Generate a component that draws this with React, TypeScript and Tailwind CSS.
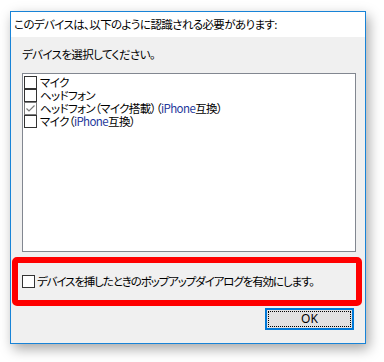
import React from "react";

const jp = { fontFamily: '"Noto Sans CJK JP", "Noto Sans", sans-serif', fontFeatureSettings: '"palt"' };

function Box({ checked = false }: { checked?: boolean }) {
  return (
    <span
      className={`flex h-[13px] w-[13px] shrink-0 items-center justify-center border bg-white ${
        checked ? "border-[#7a7a7a]" : "border-[#333333]"
      }`}
    >
      {checked && (
        <svg width="11" height="11" viewBox="0 0 11 11">
          <polyline points="1.5,5.5 4,8 9.5,2.5" fill="none" stroke="#7a7a7a" strokeWidth="1.2" />
        </svg>
      )}
    </span>
  );
}

const items: { label: React.ReactNode; checked?: boolean }[] = [
  { label: "マイク" },
  { label: "ヘッドフォン" },
  {
    label: (
      <>
        ヘッドフォン（マイク搭載）（<span className="text-[#1f3a9c]">iPhone</span>互換）
      </>
    ),
    checked: true,
  },
  {
    label: (
      <>
        マイク（<span className="text-[#1f3a9c]">iPhone</span>互換）
      </>
    ),
  },
];

export default function App() {
  return (
    <div
      className="h-[362px] w-[384px] bg-white pl-[10px] pt-[11px] text-[11.5px] leading-none tracking-[-0.6px] text-black"
      style={jp}
    >
      <div className="flex h-[333px] w-[356px] flex-col border border-[#1883d7] bg-[#f0f0f0] shadow-[3px_5px_12px_rgba(0,0,0,0.35)]">
        <div className="flex h-[25px] items-center bg-white pl-[3px]">
          このデバイスは、以下のように認識される必要があります:
        </div>
        <div className="flex h-[36px] items-center pl-[11px]">デバイスを選択してください。</div>
        <div className="ml-[11px] flex h-[179px] w-[334px] flex-col border border-[#828790] bg-white pl-[1px] pt-[2px]">
          {items.map((it, i) => (
            <div key={i} className="flex h-[13px] items-center gap-[3px]">
              <Box checked={it.checked} />
              <span className="whitespace-nowrap leading-[13px]">{it.label}</span>
            </div>
          ))}
        </div>
        <div className="ml-[1px] mt-[5px] flex h-[49px] w-[350px] items-center rounded-[5px] border-[6px] border-[#ff0000] pl-[4px]">
          <Box />
          <span className="ml-[2px] whitespace-nowrap tracking-[-1.1px]">
            デバイスを挿したときのポップアップダイアログを有効にします。
          </span>
        </div>
        <div className="mt-[2px] flex justify-end pr-[11px]">
          <button
            type="button"
            className="flex h-[22px] w-[89px] items-center justify-center border-2 border-[#0078d7] bg-[#e1e1e1] p-[1px]"
          >
            <span
              className="flex h-full w-full items-center justify-center border border-dotted border-black text-[12px] tracking-normal"
              style={{ fontFamily: '"Noto Sans", sans-serif' }}
            >
              OK
            </span>
          </button>
        </div>
      </div>
    </div>
  );
}
